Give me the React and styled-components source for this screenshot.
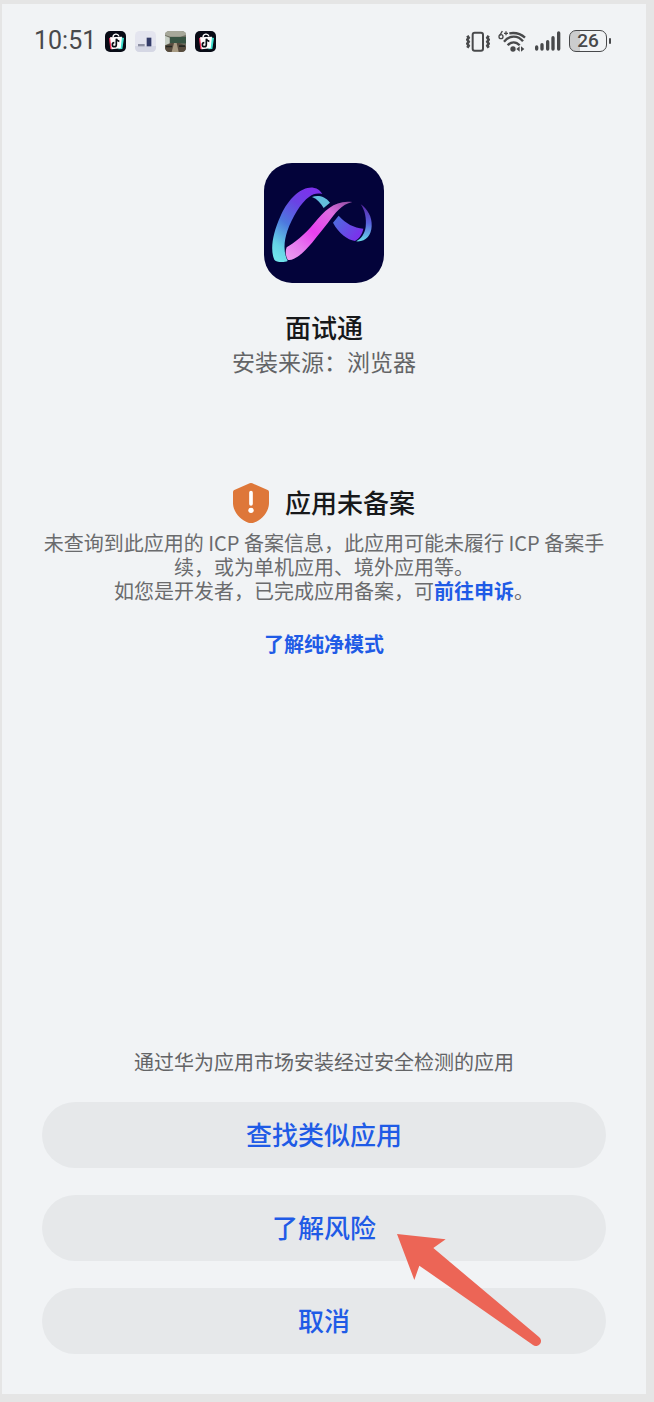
import styled, { createGlobalStyle } from 'styled-components';


const GlobalStyle = createGlobalStyle`
    * {
        box-sizing: border-box;
    }
    body {
        margin: 0;
        background-color: #e5e5e5;
        font-family: "Noto Sans CJK SC", "Noto Sans", sans-serif;
    }
`;
const Page = styled.div`
    min-height: 100vh;
    display: flex;
    padding: 4px 8px 8px 2px;
`;
const Screen = styled.div`
    flex: 1;
    display: flex;
    flex-direction: column;
    background-color: #f1f3f5;
`;
const StatusBar = styled.header`
    height: 74px;
    padding: 0 35px 0 32px;
    display: flex;
    align-items: center;
    justify-content: space-between;
    color: #48494b;
    font-family: Roboto, "Noto Sans CJK SC", sans-serif;
`;
const StatusGroup = styled.div`
    display: flex;
    align-items: center;
    gap: ${props => props.$gap}px;
`;
const Time = styled.span`
    font-size: 25px;
    line-height: 32px;
`;
const Glyph = styled.svg`
    display: block;
    flex: none;
`;
const Battery = styled.div`
    display: flex;
    align-items: center;
    gap: 2px;

    &::after {
        content: "";
        width: 2px;
        height: 6px;
        border-radius: 1px;
        background-color: #48494b;
    }
`;
const BatteryBody = styled.div`
    width: 38px;
    height: 22px;
    display: flex;
    align-items: center;
    justify-content: center;
    border: 1px solid #48494b;
    border-radius: 7px;
    background: linear-gradient(90deg, #cbcccd 28%, transparent 28%);
    font-size: 19px;
    font-weight: 500;
    line-height: 20px;
`;
const Main = styled.main`
    flex: 1;
    display: flex;
    flex-direction: column;
    align-items: center;
    padding: 85px 40px 40px;
    text-align: center;
`;
const AppName = styled.h1`
    margin: 26px 0 0;
    font-size: 26px;
    font-weight: 500;
    line-height: 36px;
    color: #17181a;
`;
const Source = styled.p`
    margin: 0;
    font-size: 23px;
    line-height: 32px;
    color: #636466;
`;
const NoticeTitle = styled.div`
    margin: 106px 0 8px;
    height: 40px;
    display: flex;
    align-items: center;
    gap: 16px;
`;
const NoticeName = styled.h2`
    margin: 0;
    padding-bottom: 2px;
    font-size: 26px;
    font-weight: 500;
    line-height: 38px;
    color: #17181a;
`;
const NoticeText = styled.p`
    margin: 0;
    font-size: 20px;
    line-height: 24px;
    color: #6a6b6d;
`;
const Link = styled.a`
    font-size: 20px;
    font-weight: bold;
    line-height: 24px;
    color: #1f5be6;
    text-decoration: none;
`;
const ModeLink = styled(Link)`
    margin-top: 29px;
`;
const Hint = styled.p`
    margin: auto 0 28px;
    font-size: 20px;
    line-height: 24px;
    color: #636466;
`;
const Actions = styled.div`
    width: 100%;
    display: flex;
    flex-direction: column;
    gap: 27px;
`;
const ActionItem = styled.div`
    position: relative;
    display: flex;
`;
const Button = styled.button`
    flex: 1;
    height: 66px;
    padding: 0 0 3px;
    border: none;
    border-radius: 33px;
    background-color: #e6e8ea;
    color: #1f5be6;
    font-family: inherit;
    font-size: 26px;
    font-weight: 500;
    cursor: pointer;
`;
const Pointer = styled.svg`
    position: absolute;
    z-index: 1;
    top: 39px;
    left: calc(50% + 73px);
    pointer-events: none;
`;

const ShopIcon = () => (
    <Glyph width="21" height="21" viewBox="0 0 63 63">
        <rect width="63" height="63" rx="15" fill="#080b16" />
        <path d="M12 22l9-4v37l-5-1z" fill="#f0325a" />
        <path d="M45 18l12 3-5 33-12 1z" fill="#3fe0cf" />
        <path d="M15 19l36-2-4 35-27 3z" fill="#fff" />
        <path d="M24 19c0-12 15-13 18-3" fill="none" stroke="#fff" strokeWidth="4" />
        <path d="M34 23v18a6 6 0 1 1-6-6M34 23c1 5 4 7 9 8" fill="none" stroke="#0b0d14" strokeWidth="5" />
    </Glyph>
);

const DeskIcon = () => (
    <Glyph width="21" height="21" viewBox="0 0 63 63">
        <rect width="63" height="63" rx="14" fill="#e4e5ef" />
        <path d="M0 45h63v4q0 14-14 14H14Q0 63 0 49z" fill="#d5d7e4" />
        <rect x="9" y="39" width="20" height="7" fill="#8e91a3" />
        <rect x="35" y="20" width="13" height="26" fill="#343c68" />
        <rect x="48" y="20" width="3" height="26" fill="#a3a8c2" />
    </Glyph>
);

const RoomIcon = () => (
    <Glyph width="21" height="21" viewBox="0 0 63 63">
        <rect width="63" height="63" rx="14" fill="#6c6c5f" />
        <path d="M14 0h35q14 0 14 12L46 17H16L0 12Q0 0 14 0z" fill="#a7a89a" />
        <path d="M0 14l14 6v17L0 43z" fill="#c6cec4" />
        <path d="M15 18h48v19H15z" fill="#385443" />
        <path d="M0 44l20-8h24l19 9v5q0 13-14 13H14Q0 63 0 49z" fill="#574c3e" />
        <path d="M27 36h8l6 27H20z" fill="#a89b83" />
        <path d="M3 44h18v5H3zM42 43h18v5H42z" fill="#242722" />
    </Glyph>
);

const VibrateIcon = () => (
    <Glyph width="24" height="21" viewBox="0 0 72 63" fill="none" stroke="#48494b">
        <rect x="20" y="5" width="31" height="54" rx="6" strokeWidth="6" />
        <path d="M4 14l4 6-4 6 4 6-4 6 4 6-4 6M68 14l-4 6 4 6-4 6 4 6-4 6 4 6" strokeWidth="8" />
    </Glyph>
);

const WifiIcon = () => (
    <Glyph width="29" height="22" viewBox="0 0 87 66" fill="none" stroke="#48494b">
        <path d="M13 3L5 17" strokeWidth="4" />
        <circle cx="9" cy="20" r="6" strokeWidth="4" />
        <path d="M18 10h12M24 4v12" strokeWidth="4" />
        <path d="M34 10c18-3 34 1 47 13M18 35c16-20 42-20 57-1M29 46c10-12 25-12 36 0" strokeWidth="7" />
        <circle cx="45" cy="57" r="8" fill="#48494b" stroke="none" />
        <path d="M55 57l10-8v16zM79 57l-10-8v16z" fill="#48494b" stroke="none" />
    </Glyph>
);

const SignalIcon = () => (
    <Glyph width="26" height="20" viewBox="0 0 78 60" stroke="#48494b" strokeWidth="10" strokeLinecap="round">
        <path d="M5 48v6M21 41v13M38 32v22M54 20v34M71 6v48" />
    </Glyph>
);

const AppLogo = () => (
    <Glyph width="120" height="120" viewBox="30 28 360 360" role="img" aria-label="面试通">
        <defs>
            <linearGradient id="arc" x1="0.7" y1="0" x2="0.2" y2="1">
                <stop offset="0" stopColor="#7d31ec" />
                <stop offset="0.25" stopColor="#6a43e4" />
                <stop offset="0.55" stopColor="#4d78df" />
                <stop offset="0.85" stopColor="#64d2e6" />
                <stop offset="1" stopColor="#70e2ea" />
            </linearGradient>
            <linearGradient id="ribbon" x1="0" y1="1" x2="1" y2="0">
                <stop offset="0" stopColor="#eba0f0" />
                <stop offset="0.22" stopColor="#e57bee" />
                <stop offset="0.45" stopColor="#e83ff0" />
                <stop offset="0.75" stopColor="#dd6de0" />
                <stop offset="1" stopColor="#8a4a9c" />
            </linearGradient>
            <linearGradient id="band" x1="0" y1="0" x2="1" y2="0.6">
                <stop offset="0" stopColor="#4873dc" />
                <stop offset="1" stopColor="#7c30ec" />
            </linearGradient>
            <linearGradient id="crescent" x1="0" y1="0" x2="0" y2="1">
                <stop offset="0" stopColor="#5a27a5" />
                <stop offset="0.5" stopColor="#5960de" />
                <stop offset="1" stopColor="#68dce9" />
            </linearGradient>
        </defs>
        <rect x="30" y="28" width="360" height="360" rx="84" fill="#03033a" />
        <path d="M61 318C48 290 55 240 80 186C105 131 145 98 178 102C192 104 200 112 205 121C188 118 178 121 166 129C140 147 115 190 100 232C90 262 87 295 101 322C90 327 65 326 61 318Z" fill="url(#arc)" />
        <path d="M174 130C190 124 212 126 228 147L209 163C200 148 190 136 174 130Z" fill="#63bddd" />
        <path d="M101 318Q91 300 98 281C120 268 150 245 181 208C213 168 245 138 295 145C262 152 245 177 222 207C182 257 150 302 120 315Q108 321 101 318Z" fill="url(#ribbon)" />
        <path d="M237 207L254 186C275 210 300 222 328 225C325 242 315 255 303 262C280 258 255 240 237 207Z" fill="url(#band)" />
        <path d="M320 152C340 165 355 190 353 218C352 245 335 266 306 263C322 255 332 240 335 220C338 195 333 170 320 152Z" fill="url(#crescent)" />
    </Glyph>
);

const ShieldIcon = () => (
    <Glyph width="36" height="40" viewBox="0 0 108 120">
        <path d="M50 1q4-2 8 0l46 20q4 2 4 6v33c0 28-24 52-46 59q-8 2-16 0C24 112 0 88 0 60V27q0-4 4-6z" fill="#de7739" />
        <path d="M54 29v34" stroke="#fff" strokeWidth="11" strokeLinecap="round" />
        <circle cx="54" cy="82" r="8" fill="#fff" />
    </Glyph>
);

export default function App() {
    return (
        <Page>
            <GlobalStyle />
            <Screen>
                <StatusBar>
                    <StatusGroup $gap={9}>
                        <Time>10:51</Time>
                        <ShopIcon />
                        <DeskIcon />
                        <RoomIcon />
                        <ShopIcon />
                    </StatusGroup>
                    <StatusGroup $gap={8}>
                        <VibrateIcon />
                        <WifiIcon />
                        <SignalIcon />
                        <Battery>
                            <BatteryBody>26</BatteryBody>
                        </Battery>
                    </StatusGroup>
                </StatusBar>
                <Main>
                    <AppLogo />
                    <AppName>面试通</AppName>
                    <Source>安装来源：浏览器</Source>
                    <NoticeTitle>
                        <ShieldIcon />
                        <NoticeName>应用未备案</NoticeName>
                    </NoticeTitle>
                    <NoticeText>
                        未查询到此应用的 ICP 备案信息，此应用可能未履行 ICP 备案手续，或为单机应用、境外应用等。
                        <br />
                        如您是开发者，已完成应用备案，可<Link href="#appeal">前往申诉</Link>。
                    </NoticeText>
                    <ModeLink href="#pure-mode">了解纯净模式</ModeLink>
                    <Hint>通过华为应用市场安装经过安全检测的应用</Hint>
                    <Actions>
                        <ActionItem>
                            <Button type="button">查找类似应用</Button>
                        </ActionItem>
                        <ActionItem>
                            <Button type="button">了解风险</Button>
                            <Pointer width="144" height="112" viewBox="52 162 432 336">
                                <path d="M52 162L198 178L161 204L478 471A14 14 0 0 1 460 495L119 257L104 300Z" fill="#ec6556" />
                            </Pointer>
                        </ActionItem>
                        <ActionItem>
                            <Button type="button">取消</Button>
                        </ActionItem>
                    </Actions>
                </Main>
            </Screen>
        </Page>
    );
}
